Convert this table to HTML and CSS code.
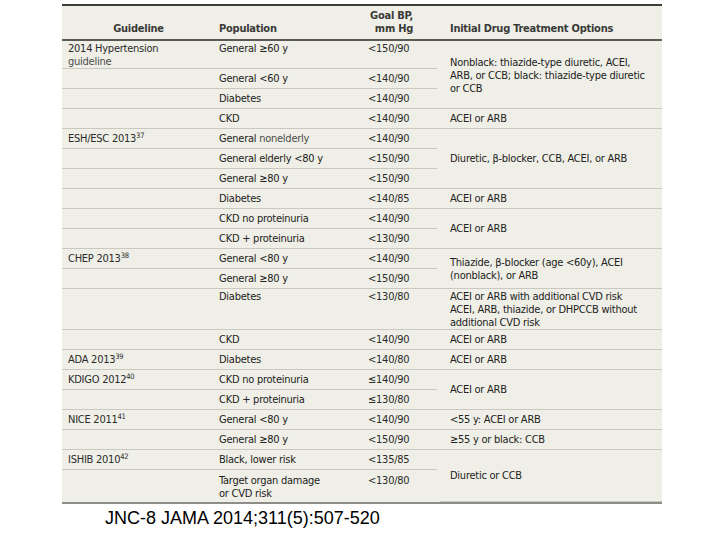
FILE: index.html
```html
<!DOCTYPE html>
<html lang="en">
<head>
<meta charset="utf-8">
<title>JNC-8 guideline comparison</title>
<link rel="stylesheet" href="styles.css">
</head>
<body>
<div class="page">
  <table class="bp">
    <colgroup>
      <col class="c1"><col class="c2"><col class="c3"><col class="c4">
    </colgroup>
    <thead>
      <tr>
        <th class="h1">Guideline</th>
        <th class="h2">Population</th>
        <th class="h3">Goal BP,<br>mm Hg</th>
        <th class="h4">Initial Drug Treatment Options</th>
      </tr>
    </thead>
    <tbody>
      <tr class="first">
        <td class="gl">2014 Hypertension<br><span class="lt">guideline</span></td>
        <td class="pop">General ≥60 y</td>
        <td class="goal g">&lt;150/90</td>
        <td class="tx mid" rowspan="3">Nonblack: thiazide-type diuretic, ACEI,<br>ARB, or CCB; black: thiazide-type diuretic<br>or CCB</td>
      </tr>
      <tr>
        <td class="gl"></td>
        <td class="pop">General &lt;60 y</td>
        <td class="goal g">&lt;140/90</td>
      </tr>
      <tr>
        <td class="gl"></td>
        <td class="pop">Diabetes</td>
        <td class="goal">&lt;140/90</td>
      </tr>
      <tr>
        <td class="gl"></td>
        <td class="pop">CKD</td>
        <td class="goal">&lt;140/90</td>
        <td class="tx">ACEI or ARB</td>
      </tr>
      <tr>
        <td class="gl">ESH/ESC 2013<sup>37</sup></td>
        <td class="pop">General <span class="lt">nonelderly</span></td>
        <td class="goal g">&lt;140/90</td>
        <td class="tx mid" rowspan="3">Diuretic, β-blocker, CCB, ACEI, or ARB</td>
      </tr>
      <tr>
        <td class="gl"></td>
        <td class="pop">General elderly &lt;80 y</td>
        <td class="goal g">&lt;150/90</td>
      </tr>
      <tr>
        <td class="gl"></td>
        <td class="pop">General ≥80 y</td>
        <td class="goal">&lt;150/90</td>
      </tr>
      <tr>
        <td class="gl"></td>
        <td class="pop">Diabetes</td>
        <td class="goal">&lt;140/85</td>
        <td class="tx">ACEI or ARB</td>
      </tr>
      <tr>
        <td class="gl"></td>
        <td class="pop">CKD no proteinuria</td>
        <td class="goal g">&lt;140/90</td>
        <td class="tx mid" rowspan="2">ACEI or ARB</td>
      </tr>
      <tr>
        <td class="gl"></td>
        <td class="pop">CKD + proteinuria</td>
        <td class="goal">&lt;130/90</td>
      </tr>
      <tr>
        <td class="gl">CHEP 2013<sup>38</sup></td>
        <td class="pop">General &lt;80 y</td>
        <td class="goal g">&lt;140/90</td>
        <td class="tx mid" rowspan="2">Thiazide, β-blocker (age &lt;60y), ACEI<br>(nonblack), or ARB</td>
      </tr>
      <tr>
        <td class="gl"></td>
        <td class="pop">General ≥80 y</td>
        <td class="goal">&lt;150/90</td>
      </tr>
      <tr class="triple">
        <td class="gl"></td>
        <td class="pop">Diabetes</td>
        <td class="goal">&lt;130/80</td>
        <td class="tx">ACEI or ARB with additional CVD risk<br>ACEI, ARB, thiazide, or DHPCCB without<br>additional CVD risk</td>
      </tr>
      <tr>
        <td class="gl"></td>
        <td class="pop">CKD</td>
        <td class="goal">&lt;140/90</td>
        <td class="tx">ACEI or ARB</td>
      </tr>
      <tr>
        <td class="gl">ADA 2013<sup>39</sup></td>
        <td class="pop">Diabetes</td>
        <td class="goal">&lt;140/80</td>
        <td class="tx">ACEI or ARB</td>
      </tr>
      <tr>
        <td class="gl">KDIGO 2012<sup>40</sup></td>
        <td class="pop">CKD no proteinuria</td>
        <td class="goal g">≤140/90</td>
        <td class="tx mid" rowspan="2">ACEI or ARB</td>
      </tr>
      <tr>
        <td class="gl"></td>
        <td class="pop">CKD + proteinuria</td>
        <td class="goal">≤130/80</td>
      </tr>
      <tr>
        <td class="gl">NICE 2011<sup>41</sup></td>
        <td class="pop">General &lt;80 y</td>
        <td class="goal">&lt;140/90</td>
        <td class="tx">&lt;55 y: ACEI or ARB</td>
      </tr>
      <tr>
        <td class="gl"></td>
        <td class="pop">General ≥80 y</td>
        <td class="goal">&lt;150/90</td>
        <td class="tx">≥55 y or black: CCB</td>
      </tr>
      <tr>
        <td class="gl">ISHIB 2010<sup>42</sup></td>
        <td class="pop">Black, lower risk</td>
        <td class="goal g">&lt;135/85</td>
        <td class="tx mid" rowspan="2">Diuretic or CCB</td>
      </tr>
      <tr class="last">
        <td class="gl"></td>
        <td class="pop">Target organ damage<br>or CVD risk</td>
        <td class="goal">&lt;130/80</td>
      </tr>
    </tbody>
  </table>
  <p class="caption">JNC-8 JAMA 2014;311(5):507-520</p>
</div>
</body>
</html>
```

FILE: styles.css
```css
:root {
  --line: #c9c9c1;
  --bg: #efefe8;
  --ink: #2b2b29;
}

html, body {
  margin: 0;
  padding: 0;
  background: #ffffff;
}

.page {
  display: flex;
  flex-direction: column;
  align-items: flex-start;
  padding: 4px 0 0 62px;
}

.bp {
  width: 600px;
  table-layout: fixed;
  border-collapse: separate;
  border-spacing: 0;
  background: var(--bg);
  border-top: 2px solid #3c3c3a;
  border-bottom: 2px solid #8c8c88;
  font-family: "DejaVu Sans Condensed", "Liberation Sans Narrow", sans-serif;
  font-size: 11px;
  letter-spacing: -0.25px;
  line-height: 13px;
  color: var(--ink);
}

.c1 { width: 153px; }
.c2 { width: 145px; }
.c3 { width: 80px; }
.c4 { width: 222px; }

th {
  height: 35px;
  box-sizing: border-box;
  padding: 0 0 4px 0;
  vertical-align: bottom;
  font-weight: bold;
  line-height: 13px;
  border-bottom: 2px solid #5a5a57;
  color: #3a3a38;
}

.h1 { text-align: center; }
.h2 { text-align: left; padding-left: 4px; }
.h3 { text-align: right; padding-right: 27px; }
.h4 { text-align: left; padding-left: 10px; }

td {
  padding: 3px 0 3px 0;
  vertical-align: top;
  border-bottom: 1px solid var(--line);
  white-space: nowrap;
}

td.gl { padding-left: 6px; }
td.pop { padding-left: 4px; color: #222220; }
td.goal { padding-left: 8px; }
td.tx { padding-left: 10px; color: #222220; }
td.mid { vertical-align: middle; padding-top: 0; padding-bottom: 0; }

td.g {
  border-bottom: none;
  padding-bottom: 4px;
  background: linear-gradient(var(--line), var(--line)) left bottom / calc(100% - 3px) 1px no-repeat;
}

.first td { padding-top: 1px; padding-bottom: 0; }
.first td.g { padding-bottom: 1px; }

.triple td { padding-top: 1px; padding-bottom: 0; }

.last td { padding-top: 4px; padding-bottom: 2px; border-bottom: none; }

.lt { color: #4c4c48; }

sup {
  font-size: 7.5px;
  line-height: 0;
  vertical-align: 4px;
}

.caption {
  margin: 4px 0 0 43px;
  font-family: "Liberation Sans", Arial, sans-serif;
  font-size: 18px;
  line-height: 20px;
  color: #000;
}
```
